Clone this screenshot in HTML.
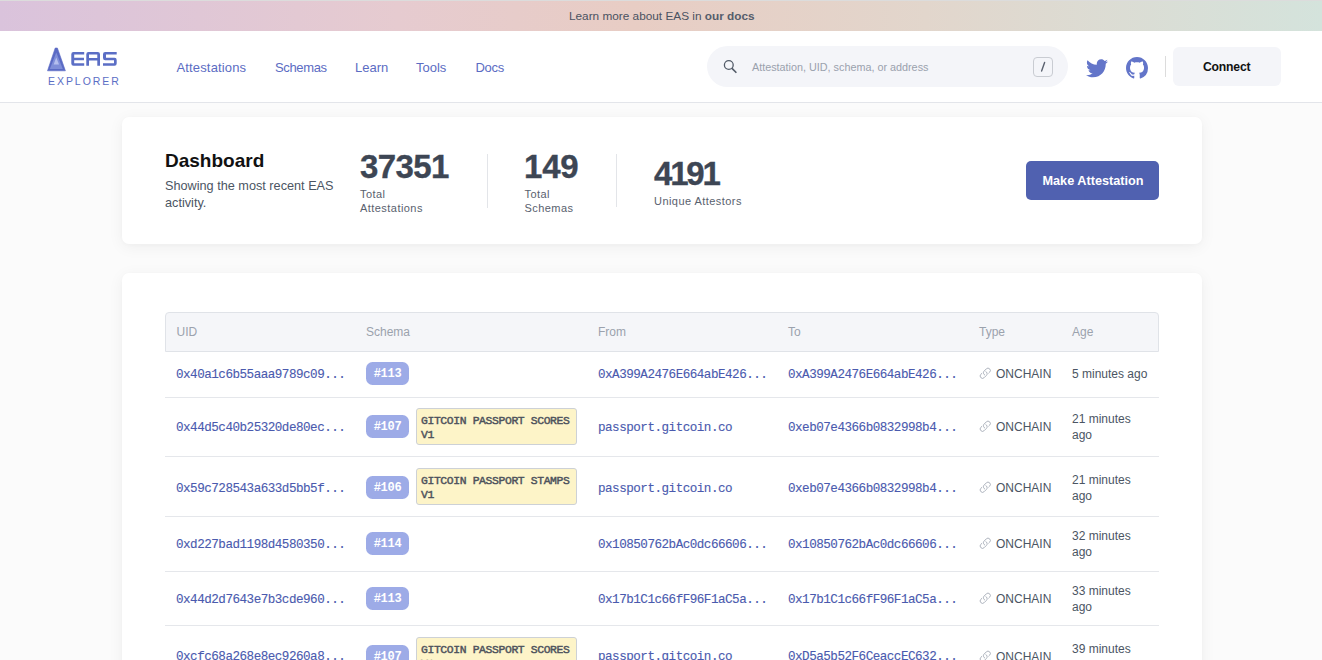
<!DOCTYPE html>
<html><head><meta charset="utf-8">
<style>
*{margin:0;padding:0;box-sizing:border-box}
html,body{width:1322px;height:660px;overflow:hidden;background:#fbfbfb;font-family:"Liberation Sans",sans-serif;}
.abs{position:absolute;white-space:nowrap}
#banner{position:absolute;left:0;top:0;width:1322px;height:31px;border-top:1px solid #dcdcdc;
 background:linear-gradient(90deg,#dac3dc 0%,#e6cbd0 30%,#e8cdc4 48%,#e2d6cc 70%,#d4e3dc 100%);}
#banner .t{position:absolute;left:569px;top:8px;font-size:11.8px;color:#4a5261;line-height:14px}
#header{position:absolute;left:0;top:31px;width:1322px;height:72px;background:#fff;border-bottom:1px solid #e3e5ea}
.nav{position:absolute;top:29px;font-size:13px;color:#5b6cc3;line-height:16px}
#search{position:absolute;left:707px;top:15px;width:361px;height:41px;border-radius:21px;background:#f4f5f9}
#search .ph{position:absolute;left:45px;top:15px;font-size:10.8px;color:#9aa1ad;line-height:13px}
#search .key{position:absolute;left:326px;top:11px;width:20px;height:20px;border:1px solid #c9ccd2;border-radius:4px;}
#connect{position:absolute;left:1173px;top:16px;width:108px;height:39px;border-radius:6px;background:#f4f5f9;}
#connect span{position:absolute;left:30px;top:13px;font-size:12.2px;letter-spacing:-0.2px;font-weight:bold;color:#111;line-height:15px}
.card{position:absolute;left:122px;width:1080px;background:#fff;border-radius:7px;box-shadow:0 3px 16px rgba(0,0,0,0.055),0 1px 4px rgba(0,0,0,0.02)}
.big{position:absolute;font-size:33px;font-weight:bold;color:#3d4654;-webkit-text-stroke:0.35px #3d4654;letter-spacing:-0.6px;line-height:33px}
.lab{position:absolute;font-size:11px;letter-spacing:0.45px;color:#59616e;line-height:14px}
.vdiv{position:absolute;width:1px;background:#e3e5e9}
#mk{position:absolute;left:904px;top:44px;width:133px;height:39px;background:#5061b0;border-radius:5px}
#mk span{position:absolute;left:16.5px;top:12.5px;font-size:12.7px;font-weight:bold;color:#fff;line-height:15px}
#thead{position:absolute;left:43px;top:39px;width:994px;height:40px;background:#f5f6f9;border:1px solid #e0e3e8;border-radius:4px 4px 0 0}
.th{position:absolute;top:12px;font-size:12px;color:#9ba2ad;line-height:14px}
.rb{position:absolute;left:165px;width:994px;height:1px;background:#e5e7eb}
.mono{position:absolute;white-space:nowrap;font-family:"Liberation Mono",monospace;font-size:12.6px;letter-spacing:-0.5px;-webkit-text-stroke:0.12px #4a5aae;color:#4a5aae;line-height:14px}
.badge{position:absolute;left:366px;width:43px;height:23px;border-radius:6.5px;background:#9dabe7;color:#fff;font-family:"Liberation Mono",monospace;font-weight:bold;font-size:12px;line-height:25px;text-align:center;letter-spacing:-0.3px}
.yb{position:absolute;left:416px;width:161px;height:37px;border:1px solid #cdd1d6;border-radius:3px;background:#fdf4c8;font-family:"Liberation Mono",monospace;font-weight:normal;font-size:11.4px;letter-spacing:-0.38px;-webkit-text-stroke:0.45px #4d525c;color:#4d525c;line-height:14px;padding:4.5px 0 0 4px;white-space:nowrap}
.type{position:absolute;white-space:nowrap;font-size:12px;color:#4b5563;line-height:14px}
.age{position:absolute;white-space:nowrap;font-size:12px;color:#4b5563;line-height:16px}
.link{position:absolute;width:14px;height:14px}
.link svg{display:block}
</style></head><body>
<div id="banner"><div class="t">Learn more about EAS in <b style="font-weight:bold;color:#555d6b">our docs</b></div></div>
<div id="header">
  <svg class="abs" style="left:46px;top:15px" width="76" height="42" viewBox="46 46 76 42">
    <path d="M55.2 48 H57.4 L65.4 70.8 H47.5 Z" fill="#5a6ac4" stroke="#5a6ac4" stroke-width="0.6" stroke-linejoin="round"/>
    <path d="M56.3 52.5 L62.8 69 L49.8 69 Z" fill="#7f8ed8"/>
    <path d="M56.3 57.5 L59 64.5 L53.6 64.5 Z" fill="#b5bfee"/>
    <g fill="#5b6ec5">
      <path d="M73.5 52 H84.2 V54.6 H74.2 V57.7 H84 V60.2 H74.2 V63.2 H84.2 V65.8 H73.5 A2.2 2.2 0 0 1 71.3 63.6 V54.2 A2.2 2.2 0 0 1 73.5 52 Z"/>
      <path d="M88.5 52 H97.8 A2.2 2.2 0 0 1 100 54.2 V65.8 H97.3 V60.5 H89 V65.8 H86.3 V54.2 A2.2 2.2 0 0 1 88.5 52 Z M89 54.6 V58 H97.3 V54.6 Z"/>
      <path d="M105.2 52 H116.7 V54.6 H106 V57.7 H114.5 A2.2 2.2 0 0 1 116.7 59.9 V63.6 A2.2 2.2 0 0 1 114.5 65.8 H103 V63.2 H114 V60.2 H105.2 A2.2 2.2 0 0 1 103 58 V54.2 A2.2 2.2 0 0 1 105.2 52 Z"/>
    </g>
  </svg>
  <div class="abs" style="left:48px;top:44px;font-size:10.5px;letter-spacing:1.95px;color:#5b6ec5;line-height:12px">EXPLORER</div>
  <div class="nav" style="left:176.5px;letter-spacing:0.15px">Attestations</div>
  <div class="nav" style="left:275px;letter-spacing:-0.35px">Schemas</div>
  <div class="nav" style="left:355px">Learn</div>
  <div class="nav" style="left:416px">Tools</div>
  <div class="nav" style="left:475.5px;letter-spacing:-0.3px">Docs</div>
  <div id="search">
    <svg class="abs" style="left:16px;top:13px" width="16" height="16" viewBox="0 0 16 16"><circle cx="5.8" cy="6" r="4.4" fill="none" stroke="#525b68" stroke-width="1.3"/><path d="M9 9.4 L13.4 13.8" stroke="#525b68" stroke-width="1.6" stroke-linecap="butt"/></svg>
    <div class="ph">Attestation, UID, schema, or address</div>
    <div class="key"><svg class="abs" style="left:0;top:0" width="18" height="18" viewBox="0 0 18 18"><path d="M10.6 4.5 L7.6 13" stroke="#5b6270" stroke-width="1.4" stroke-linecap="round"/></svg></div>
  </div>
  <svg class="abs" style="left:1086px;top:28px" width="22" height="19" viewBox="0 0 24 20"><path fill="#6375c9" d="M24 2.4c-.9.4-1.8.6-2.8.8 1-.6 1.8-1.6 2.2-2.7-1 .6-2 1-3.1 1.2C19.4.7 18.1 0 16.6 0c-2.7 0-4.9 2.2-4.9 4.9 0 .4 0 .8.1 1.1C7.7 5.8 4.1 3.9 1.7.9c-.4.7-.7 1.6-.7 2.5 0 1.7.9 3.2 2.2 4.1-.8 0-1.6-.2-2.2-.6v.1c0 2.4 1.7 4.4 3.9 4.8-.4.1-.8.2-1.3.2-.3 0-.6 0-.9-.1.6 2 2.4 3.4 4.6 3.4-1.7 1.3-3.8 2.1-6.1 2.1-.4 0-.8 0-1.2-.1 2.2 1.4 4.8 2.2 7.5 2.2 9.1 0 14-7.5 14-14v-.6c1-.7 1.8-1.6 2.5-2.5z"/></svg>
  <svg class="abs" style="left:1126px;top:26px" width="22" height="22" viewBox="0 0 16 16"><path fill="#6375c9" d="M8 0C3.58 0 0 3.58 0 8c0 3.54 2.29 6.53 5.47 7.59.4.07.55-.17.55-.38 0-.19-.01-.82-.01-1.49-2.01.37-2.53-.49-2.69-.94-.09-.23-.48-.94-.82-1.13-.28-.15-.68-.52-.01-.53.63-.01 1.08.58 1.23.82.72 1.21 1.87.87 2.33.66.07-.52.28-.87.51-1.07-1.78-.2-3.64-.89-3.640-3.95 0-.87.31-1.59.82-2.15-.08-.2-.36-1.02.08-2.12 0 0 .67-.21 2.2.82.64-.18 1.32-.27 2-.27.68 0 1.36.09 2 .27 1.53-1.04 2.2-.82 2.2-.82.44 1.1.16 1.92.08 2.12.51.56.82 1.27.82 2.15 0 3.07-1.87 3.75-3.65 3.95.29.25.54.73.54 1.48 0 1.07-.01 1.93-.01 2.2 0 .21.15.46.55.38A8.013 8.013 0 0016 8c0-4.42-3.58-8-8-8z"/></svg>
  <div class="abs" style="left:1165px;top:25px;width:1px;height:21px;background:#dcdcdc"></div>
  <div id="connect"><span>Connect</span></div>
</div>

<div class="card" style="top:117px;height:127px">
  <div class="abs" style="left:43px;top:33px;font-size:19px;font-weight:bold;color:#111;line-height:22px">Dashboard</div>
  <div class="abs" style="left:43px;top:61px;font-size:12.7px;color:#4b5563;line-height:17px;white-space:normal;width:185px">Showing the most recent EAS activity.</div>
  <div class="big" style="left:238px;top:33px">37351</div>
  <div class="lab" style="left:238px;top:70px">Total<br>Attestations</div>
  <div class="vdiv" style="left:365px;top:37px;height:54px"></div>
  <div class="big" style="left:402px;top:33px;letter-spacing:-0.2px">149</div>
  <div class="lab" style="left:402.5px;top:70px">Total<br>Schemas</div>
  <div class="vdiv" style="left:494px;top:37px;height:53px"></div>
  <div class="big" style="left:532px;top:40px;letter-spacing:-2.2px">4191</div>
  <div class="lab" style="left:532px;top:77px">Unique Attestors</div>
  <div id="mk"><span>Make Attestation</span></div>
</div>

<div class="card" style="top:273px;height:420px">
  <div id="thead">
    <div class="th" style="left:10.5px">UID</div>
    <div class="th" style="left:200px">Schema</div>
    <div class="th" style="left:432px">From</div>
    <div class="th" style="left:622px">To</div>
    <div class="th" style="left:813px">Type</div>
    <div class="th" style="left:906px">Age</div>
  </div>
</div>
<div id="rows">
<div class="rb" style="top:397px"></div>
<div class="mono" style="left:176px;top:367.7px">0x40a1c6b55aaa9789c09...</div>
<div class="badge" style="top:362px">#113</div>
<div class="mono" style="left:598px;top:367.7px">0xA399A2476E664abE426...</div>
<div class="mono" style="left:788px;top:367.7px">0xA399A2476E664abE426...</div>
<div class="link" style="left:978.7px;top:367px"><svg width="12.5" height="12.5" viewBox="0 0 24 24"><path d="M13.19 8.688a4.5 4.5 0 011.242 7.244l-4.5 4.5a4.5 4.5 0 01-6.364-6.364l1.757-1.757m13.35-.622l1.757-1.757a4.5 4.5 0 00-6.364-6.364l-4.5 4.5a4.5 4.5 0 001.242 7.244" fill="none" stroke="#a3aab5" stroke-width="1.7" stroke-linecap="round" stroke-linejoin="round"/></svg></div>
<div class="type" style="left:996px;top:367px">ONCHAIN</div>
<div class="age" style="left:1072px;top:366px">5 minutes ago</div>
<div class="rb" style="top:456px"></div>
<div class="mono" style="left:176px;top:420.7px">0x44d5c40b25320de80ec...</div>
<div class="badge" style="top:415px">#107</div>
<div class="yb" style="top:408px">GITCOIN PASSPORT SCORES<br>V1</div>
<div class="mono" style="left:598px;top:420.7px">passport.gitcoin.co</div>
<div class="mono" style="left:788px;top:420.7px">0xeb07e4366b0832998b4...</div>
<div class="link" style="left:978.7px;top:420px"><svg width="12.5" height="12.5" viewBox="0 0 24 24"><path d="M13.19 8.688a4.5 4.5 0 011.242 7.244l-4.5 4.5a4.5 4.5 0 01-6.364-6.364l1.757-1.757m13.35-.622l1.757-1.757a4.5 4.5 0 00-6.364-6.364l-4.5 4.5a4.5 4.5 0 001.242 7.244" fill="none" stroke="#a3aab5" stroke-width="1.7" stroke-linecap="round" stroke-linejoin="round"/></svg></div>
<div class="type" style="left:996px;top:420px">ONCHAIN</div>
<div class="age" style="left:1072px;top:411px">21 minutes<br>ago</div>
<div class="rb" style="top:516px"></div>
<div class="mono" style="left:176px;top:481.7px">0x59c728543a633d5bb5f...</div>
<div class="badge" style="top:476px">#106</div>
<div class="yb" style="top:468px">GITCOIN PASSPORT STAMPS<br>V1</div>
<div class="mono" style="left:598px;top:481.7px">passport.gitcoin.co</div>
<div class="mono" style="left:788px;top:481.7px">0xeb07e4366b0832998b4...</div>
<div class="link" style="left:978.7px;top:481px"><svg width="12.5" height="12.5" viewBox="0 0 24 24"><path d="M13.19 8.688a4.5 4.5 0 011.242 7.244l-4.5 4.5a4.5 4.5 0 01-6.364-6.364l1.757-1.757m13.35-.622l1.757-1.757a4.5 4.5 0 00-6.364-6.364l-4.5 4.5a4.5 4.5 0 001.242 7.244" fill="none" stroke="#a3aab5" stroke-width="1.7" stroke-linecap="round" stroke-linejoin="round"/></svg></div>
<div class="type" style="left:996px;top:481px">ONCHAIN</div>
<div class="age" style="left:1072px;top:472px">21 minutes<br>ago</div>
<div class="rb" style="top:571px"></div>
<div class="mono" style="left:176px;top:538.2px">0xd227bad1198d4580350...</div>
<div class="badge" style="top:532px">#114</div>
<div class="mono" style="left:598px;top:538.2px">0x10850762bAc0dc66606...</div>
<div class="mono" style="left:788px;top:538.2px">0x10850762bAc0dc66606...</div>
<div class="link" style="left:978.7px;top:537px"><svg width="12.5" height="12.5" viewBox="0 0 24 24"><path d="M13.19 8.688a4.5 4.5 0 011.242 7.244l-4.5 4.5a4.5 4.5 0 01-6.364-6.364l1.757-1.757m13.35-.622l1.757-1.757a4.5 4.5 0 00-6.364-6.364l-4.5 4.5a4.5 4.5 0 001.242 7.244" fill="none" stroke="#a3aab5" stroke-width="1.7" stroke-linecap="round" stroke-linejoin="round"/></svg></div>
<div class="type" style="left:996px;top:537px">ONCHAIN</div>
<div class="age" style="left:1072px;top:528px">32 minutes<br>ago</div>
<div class="rb" style="top:625px"></div>
<div class="mono" style="left:176px;top:593.2px">0x44d2d7643e7b3cde960...</div>
<div class="badge" style="top:587px">#113</div>
<div class="mono" style="left:598px;top:593.2px">0x17b1C1c66fF96F1aC5a...</div>
<div class="mono" style="left:788px;top:593.2px">0x17b1C1c66fF96F1aC5a...</div>
<div class="link" style="left:978.7px;top:592px"><svg width="12.5" height="12.5" viewBox="0 0 24 24"><path d="M13.19 8.688a4.5 4.5 0 011.242 7.244l-4.5 4.5a4.5 4.5 0 01-6.364-6.364l1.757-1.757m13.35-.622l1.757-1.757a4.5 4.5 0 00-6.364-6.364l-4.5 4.5a4.5 4.5 0 001.242 7.244" fill="none" stroke="#a3aab5" stroke-width="1.7" stroke-linecap="round" stroke-linejoin="round"/></svg></div>
<div class="type" style="left:996px;top:592px">ONCHAIN</div>
<div class="age" style="left:1072px;top:583px">33 minutes<br>ago</div>
<div class="rb" style="top:685px"></div>
<div class="mono" style="left:176px;top:650.2px">0xcfc68a268e8ec9260a8...</div>
<div class="badge" style="top:644.5px">#107</div>
<div class="yb" style="top:637.0px">GITCOIN PASSPORT SCORES<br>V1</div>
<div class="mono" style="left:598px;top:650.2px">passport.gitcoin.co</div>
<div class="mono" style="left:788px;top:650.2px">0xD5a5b52F6CeaccEC632...</div>
<div class="link" style="left:978.7px;top:649.5px"><svg width="12.5" height="12.5" viewBox="0 0 24 24"><path d="M13.19 8.688a4.5 4.5 0 011.242 7.244l-4.5 4.5a4.5 4.5 0 01-6.364-6.364l1.757-1.757m13.35-.622l1.757-1.757a4.5 4.5 0 00-6.364-6.364l-4.5 4.5a4.5 4.5 0 001.242 7.244" fill="none" stroke="#a3aab5" stroke-width="1.7" stroke-linecap="round" stroke-linejoin="round"/></svg></div>
<div class="type" style="left:996px;top:649.5px">ONCHAIN</div>
<div class="age" style="left:1072px;top:640.5px">39 minutes<br>ago</div>

</div>
</body></html>
